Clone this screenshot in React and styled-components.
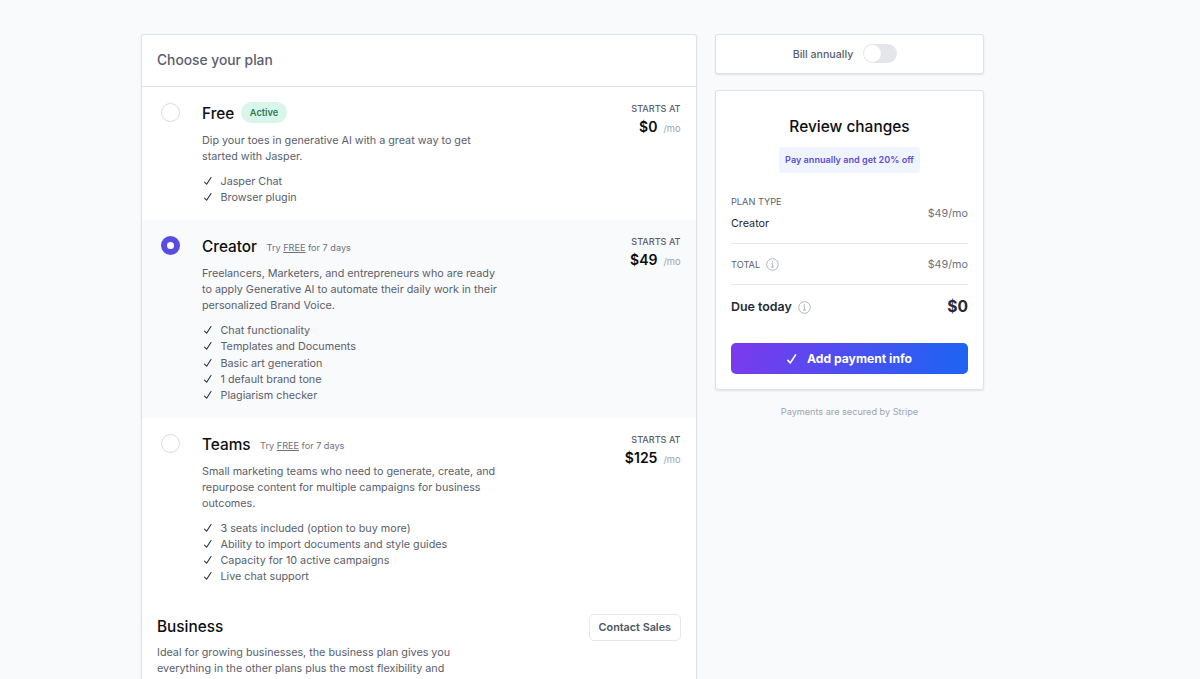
import React, { useState } from "react";
import styled, { createGlobalStyle } from "styled-components";

const plans = [
  {
    id: "free",
    name: "Free",
    active: true,
    price: "$0",
    description: "Dip your toes in generative AI with a great way to get started with Jasper.",
    features: ["Jasper Chat", "Browser plugin"],
  },
  {
    id: "creator",
    name: "Creator",
    trial: true,
    price: "$49",
    description:
      "Freelancers, Marketers, and entrepreneurs who are ready to apply Generative AI to automate their daily work in their personalized Brand Voice.",
    features: [
      "Chat functionality",
      "Templates and Documents",
      "Basic art generation",
      "1 default brand tone",
      "Plagiarism checker",
    ],
  },
  {
    id: "teams",
    name: "Teams",
    trial: true,
    price: "$125",
    description:
      "Small marketing teams who need to generate, create, and repurpose content for multiple campaigns for business outcomes.",
    features: [
      "3 seats included (option to buy more)",
      "Ability to import documents and style guides",
      "Capacity for 10 active campaigns",
      "Live chat support",
    ],
  },
];

function CheckIcon({ size = 10, width = 1.7 }) {
  return (
    <svg width={size} height={size} viewBox="0 0 16 16" fill="none" stroke="currentColor" strokeWidth={width} strokeLinecap="round" strokeLinejoin="round">
      <path d="M2.5 9.8L5.8 13.2L12.8 2.5" />
    </svg>
  );
}

function InfoIcon() {
  return (
    <svg width="13" height="13" viewBox="0 0 13 13" fill="none" stroke="#9ca3af" strokeWidth="0.8">
      <circle cx="6.5" cy="6.5" r="5.8" />
      <path d="M5.3 5.7H6.6V9M5 9.1H8.1" />
      <circle cx="6.4" cy="3.9" r="0.6" fill="#9ca3af" stroke="none" />
    </svg>
  );
}

export default function App() {
  const [selected, setSelected] = useState("creator");
  const [annual, setAnnual] = useState(false);
  const current = plans.find((plan) => plan.id === selected);

  return (
    <>
      <GlobalStyle />
      <Page>
        <PlansCard>
          <CardHeader>Choose your plan</CardHeader>
          {plans.map((plan) => (
            <Plan key={plan.id} $selected={plan.id === selected} onClick={() => setSelected(plan.id)}>
              <Radio $checked={plan.id === selected} role="radio" aria-checked={plan.id === selected} />
              <PlanBody>
                <TitleRow>
                  <PlanName>{plan.name}</PlanName>
                  {plan.active && <ActivePill>Active</ActivePill>}
                  {plan.trial && (
                    <Trial>
                      Try <u>FREE</u> for 7 days
                    </Trial>
                  )}
                </TitleRow>
                <Description>{plan.description}</Description>
                <Features>
                  {plan.features.map((feature) => (
                    <li key={feature}>
                      <CheckIcon />
                      {feature}
                    </li>
                  ))}
                </Features>
              </PlanBody>
              <PriceBox>
                <Label>STARTS AT</Label>
                <Price>
                  {plan.price}
                  <span>/mo</span>
                </Price>
              </PriceBox>
            </Plan>
          ))}
          <Business>
            <div>
              <TitleRow>
                <PlanName>Business</PlanName>
              </TitleRow>
              <Description>
                Ideal for growing businesses, the business plan gives you everything in the other plans plus the most
                flexibility and
              </Description>
            </div>
            <ContactButton>Contact Sales</ContactButton>
          </Business>
        </PlansCard>

        <Sidebar>
          <BillingCard>
            Bill annually
            <Toggle $on={annual} role="switch" aria-checked={annual} onClick={() => setAnnual(!annual)} />
          </BillingCard>
          <ReviewCard>
            <ReviewTitle>Review changes</ReviewTitle>
            <Promo>Pay annually and get 20% off</Promo>
            <PlanRow>
              <div>
                <Label $light>PLAN TYPE</Label>
                <SelectedName>{current.name}</SelectedName>
              </div>
              <Amount>{current.price}/mo</Amount>
            </PlanRow>
            <TotalRow>
              <RowLabel>
                <Label $light>TOTAL</Label>
                <InfoIcon />
              </RowLabel>
              <Amount>{current.price}/mo</Amount>
            </TotalRow>
            <DueRow>
              <RowLabel>
                Due today
                <InfoIcon />
              </RowLabel>
              <DueAmount>$0</DueAmount>
            </DueRow>
            <PayButton>
              <CheckIcon size={12} width={2.2} />
              Add payment info
            </PayButton>
          </ReviewCard>
          <Secured>Payments are secured by Stripe</Secured>
        </Sidebar>
      </Page>
    </>
  );
}

const GlobalStyle = createGlobalStyle`
  * {
    box-sizing: border-box;
  }
  body {
    margin: 0;
    background: #f9fafb;
    font-family: Inter, "Liberation Sans", sans-serif;
    font-size: 10.77px;
    line-height: 16.12px;
    color: #59606c;
  }
  button {
    font-family: inherit;
    cursor: pointer;
  }
`;

const Page = styled.main`
  display: flex;
  align-items: flex-start;
  gap: 18px;
  height: 100vh;
  overflow: hidden;
  padding: 34px 0 0 141px;
`;

const Card = styled.section`
  background: #fff;
  border: 1px solid #dfe2e6;
  border-radius: 3px;
  box-shadow: 0 1px 2px rgba(0, 0, 0, 0.1);
`;

const PlansCard = styled(Card)`
  width: 556px;
  height: 100%;
  overflow: hidden;
  border-bottom: 0;
  border-radius: 3px 3px 0 0;
`;

const CardHeader = styled.h1`
  margin: 0;
  height: 52px;
  padding: 0 15px;
  display: flex;
  align-items: center;
  border-bottom: 1px solid #dfe2e6;
  font-size: 13.8px;
  font-weight: 450;
`;

const Plan = styled.div`
  display: flex;
  align-items: flex-start;
  padding: 16.1px 15.5px 14px 19px;
  background: ${({ $selected }) => ($selected ? "#f9fafb" : "#fff")};
  cursor: pointer;
`;

const Radio = styled.span`
  width: 19px;
  height: 19px;
  flex: none;
  border-radius: 50%;
  border: ${({ $checked }) => ($checked ? "6px solid #584ce4" : "1px solid #d9dce1")};
  background: #fff;
`;

const PlanBody = styled.div`
  width: 300px;
  margin-left: 22px;
`;

const TitleRow = styled.div`
  display: flex;
  height: 29.6px;
`;

const PlanName = styled.h2`
  margin: 0;
  font-size: 15.35px;
  line-height: 21px;
  font-weight: 450;
  color: #0b0d12;
`;

const ActivePill = styled.span`
  height: 21px;
  margin: -1px 0 0 7px;
  padding: 0 8.5px;
  border-radius: 11px;
  background: #d9f7e9;
  color: #2d7a5f;
  font-size: 9.25px;
  line-height: 21px;
  font-weight: 600;
`;

const Trial = styled.span`
  margin-left: 9.5px;
  font-size: 9.15px;
  line-height: 24px;
  color: #6b7280;
`;

const Description = styled.p`
  margin: 0;
  width: 300px;
`;

const Features = styled.ul`
  margin: 9px 0 0;
  padding: 0;
  list-style: none;

  li {
    display: flex;
    align-items: center;
  }

  svg {
    margin: 0 7.5px 2px 1px;
    color: #1f2937;
  }
`;

const PriceBox = styled.div`
  margin-left: auto;
  text-align: right;
`;

const Label = styled.div`
  font-size: ${({ $light }) => ($light ? 9.2 : 9.1)}px;
  line-height: 12px;
  font-weight: ${({ $light }) => ($light ? 400 : 500)};
`;

const Price = styled.div`
  margin-top: 2px;
  font-size: 14px;
  line-height: 20px;
  font-weight: 600;
  color: #0b0d12;

  span {
    margin-left: 6px;
    font-size: 9.3px;
    font-weight: 400;
    color: #9ca3af;
  }
`;

const Business = styled.div`
  display: flex;
  justify-content: space-between;
  align-items: flex-start;
  padding: 16.1px 15px;
`;

const ContactButton = styled.button`
  height: 27px;
  margin-top: -2px;
  padding: 1px 9px 0;
  background: #fff;
  border: 1px solid #e5e7eb;
  border-radius: 5px;
  color: #4b5563;
  font-size: 10.8px;
  font-weight: 600;
`;

const Sidebar = styled.aside`
  width: 269px;
`;

const BillingCard = styled(Card)`
  display: flex;
  align-items: center;
  justify-content: center;
  gap: 10px;
  height: 40px;
  padding: 2px 9px 0 0;
  font-size: 10.65px;
  font-weight: 500;
`;

const Toggle = styled.button`
  display: flex;
  justify-content: ${({ $on }) => ($on ? "flex-end" : "flex-start")};
  width: 34px;
  height: 19px;
  margin-bottom: 4px;
  padding: 1px;
  border: 0;
  border-radius: 10px;
  background: ${({ $on }) => ($on ? "#584ce4" : "#e5e6e9")};

  &::before {
    content: "";
    width: 17px;
    height: 17px;
    border-radius: 50%;
    background: #fff;
  }
`;

const ReviewCard = styled(Card)`
  display: flex;
  flex-direction: column;
  height: 300px;
  margin-top: 16px;
  padding: 25px 15px 15px;
`;

const ReviewTitle = styled.h2`
  margin: 0;
  text-align: center;
  font-size: 15.45px;
  line-height: 22px;
  font-weight: 550;
  color: #0b0d12;
`;

const Promo = styled.div`
  align-self: center;
  height: 26px;
  margin-top: 9px;
  padding: 0 6px;
  border-radius: 3px;
  background: #f0f4ff;
  color: #5a4fd6;
  font-size: 9.1px;
  line-height: 26px;
  font-weight: 600;
`;

const Row = styled.div`
  display: flex;
  align-items: center;
  justify-content: space-between;
`;

const PlanRow = styled(Row)`
  height: 71px;
  padding-bottom: 11px;
  border-bottom: 1px solid #e5e7eb;
  align-items: flex-end;
`;

const SelectedName = styled.div`
  margin-top: 8px;
  line-height: 16px;
  color: #1f2330;
`;

const Amount = styled.span`
  color: #6b7280;

  ${PlanRow} & {
    margin-bottom: 10px;
  }
`;

const TotalRow = styled(Row)`
  height: 41px;
  padding-top: 1px;
  border-bottom: 1px solid #e5e7eb;

  ${Amount} {
    padding-top: 1px;
  }
`;

const RowLabel = styled.div`
  display: flex;
  align-items: center;
  gap: 6px;
`;

const DueRow = styled(Row)`
  height: 44px;
  font-size: 12.4px;
  font-weight: 600;
  color: #252a37;
`;

const DueAmount = styled.strong`
  font-size: 15.6px;
  font-weight: 700;
`;

const PayButton = styled.button`
  display: flex;
  align-items: center;
  justify-content: center;
  gap: 9px;
  height: 31px;
  margin-top: auto;
  padding: 0;
  border: 0;
  border-radius: 5px;
  background: linear-gradient(100deg, #7c3aed, #1b64f3);
  color: #fff;
  font-size: 12.15px;
  font-weight: 700;

  svg {
    margin-left: -1px;
  }
`;

const Secured = styled.p`
  margin: 14px 0 0;
  text-align: center;
  font-size: 9.15px;
  color: #9ca3af;
`;
